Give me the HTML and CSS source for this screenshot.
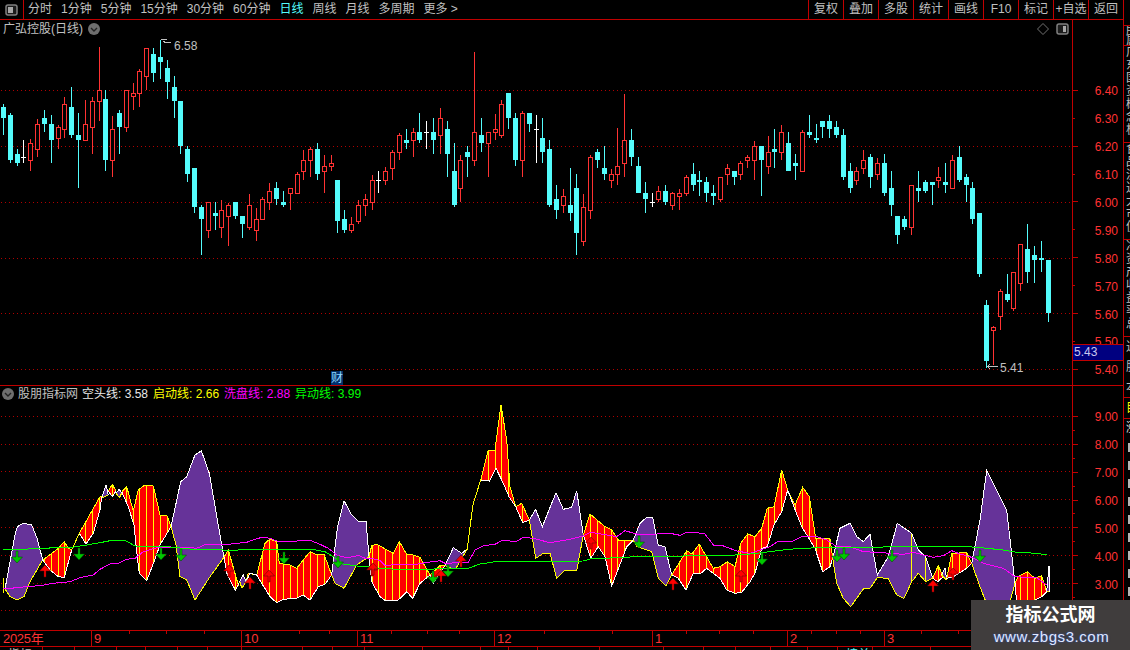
FILE: index.html
```html
<!DOCTYPE html>
<html lang="zh">
<head>
<meta charset="utf-8">
<title>广弘控股(日线)</title>
<link rel="stylesheet" href="styles.css">
</head>
<body>
<div class="app">
  <div class="left">
    <header class="toolbar">
      <div class="box-btn">
        <svg width="13" height="12" viewBox="0 0 13 12"><rect x="1" y="1" width="11" height="10" rx="2" class="ico-frame"/><rect x="3" y="3" width="5" height="6" class="ico-fill"/></svg>
      </div>
      <nav class="periods">
        <span>分时</span><span>1分钟</span><span>5分钟</span><span>15分钟</span><span>30分钟</span><span>60分钟</span><span class="active">日线</span><span>周线</span><span>月线</span><span>多周期</span><span>更多 &gt;</span>
      </nav>
      <nav class="actions">
        <span>复权</span><span>叠加</span><span>多股</span><span>统计</span><span>画线</span><span>F10</span><span>标记</span><span>+自选</span><span>返回</span>
      </nav>
    </header>

    <section class="pane pane-main">
      <div class="plot">
        <svg id="mainChart" class="canvas" viewBox="0 20 1072 365" width="1072" height="365"></svg>
        <div class="pane-head">
          <span class="name">广弘控股(日线)</span>
          <svg class="chev" width="12" height="12" viewBox="0 0 12 12"><circle cx="6" cy="6" r="6" class="chev-bg"/><path d="M3 5l3 3 3-3" class="chev-mark"/></svg>
          <span class="head-tools">
            <svg width="12" height="12" viewBox="0 0 12 12"><path d="M6 .5L11.5 6 6 11.5.5 6z" class="ico-diamond"/></svg>
            <svg width="13" height="12" viewBox="0 0 13 12"><rect x="1" y="1" width="11" height="10" rx="2" class="ico-frame"/><rect x="7" y="3" width="3" height="6" class="ico-fill"/></svg>
          </span>
        </div>
        <span class="cai">财</span>
      </div>
      <div class="axis">
        <svg id="mainAxis" viewBox="1073 20 50 365" width="50" height="365"></svg>
        <div class="price-tag">5.43</div>
      </div>
    </section>

    <section class="pane pane-sub">
      <div class="plot">
        <svg id="subChart" class="canvas" viewBox="0 386 1072 244" width="1072" height="244"></svg>
        <div class="pane-head sub-head">
          <svg class="chev" width="12" height="12" viewBox="0 0 12 12"><circle cx="6" cy="6" r="6" class="chev-bg"/><path d="M3 5l3 3 3-3" class="chev-mark"/></svg>
          <span class="name">股朋指标网</span>
          <span class="lg lg-white">空头线: 3.58</span>
          <span class="lg lg-yellow">启动线: 2.66</span>
          <span class="lg lg-magenta">洗盘线: 2.88</span>
          <span class="lg lg-green">异动线: 3.99</span>
        </div>
      </div>
      <div class="axis">
        <svg id="subAxis" viewBox="1073 386 50 244" width="50" height="244"></svg>
      </div>
    </section>

    <div class="datebar">
      <svg id="dateTicks" class="date-ticks" viewBox="0 0 1123 4" width="1123" height="4"></svg>
      <span class="m m-year">2025年</span><span class="m m-9">9</span><span class="m m-10">10</span><span class="m m-11">11</span><span class="m m-12">12</span><span class="m m-1">1</span><span class="m m-2">2</span><span class="m m-3">3</span>
    </div>

    <div class="tabs" id="tabs"></div>
  </div>

  <aside class="strip">
    <div class="st st-a"></div>
    <div class="st st-b">所属</div>
    <div class="st st-c">广东国资概念板</div>
    <div class="st st-d">食品流通大市值</div>
    <div class="st st-e">净资产收益率总</div>
    <div class="st st-f">通股本</div>
    <div class="st st-y">目</div>
    <div class="st st-g">
      <div class="st-word">涨</div>
      <i></i><i></i><i></i><i></i><i></i><i></i><i></i><i></i><i></i>
    </div>
  </aside>

  <div class="watermark">
    <div class="wm-title">指标公式网</div>
    <div class="wm-url">www.zbgs3.com</div>
  </div>
</div>
<script src="script.js"></script>
</body>
</html>
```
FILE: styles.css
```css
* { box-sizing: border-box; }
html, body { margin: 0; padding: 0; background: #000; }
body {
  font-family: "Liberation Sans", "Noto Sans CJK SC", sans-serif;
  font-size: 12px;
  color: #c0c0c0;
}
.app {
  position: relative;
  display: flex;
  width: 1130px;
  height: 650px;
  overflow: hidden;
  background: #000;
}
.left {
  display: flex;
  flex-direction: column;
  width: 1124px;
  height: 650px;
  border-right: 1px solid #c00000;
}
.toolbar {
  display: flex;
  align-items: stretch;
  height: 20px;
  border-bottom: 1px solid #c00000;
  line-height: 19px;
  white-space: nowrap;
}
.box-btn {
  display: flex;
  align-items: center;
  justify-content: center;
  width: 24px;
  border-right: 1px solid #c00000;
}
.periods {
  display: flex;
  gap: 9px;
  padding-left: 4px;
}
.periods .active { color: #54fcfc; }
.actions {
  display: flex;
  margin-left: auto;
}
.actions span {
  width: 35px;
  border-left: 1px solid #c00000;
  text-align: center;
}
.ico-frame { fill: #1c1c1c; stroke: #808080; stroke-width: 1.5; }
.ico-fill { fill: #a8a8a8; }
.ico-diamond { fill: none; stroke: #707070; stroke-width: 1; }
.chev-bg { fill: #6e6e6e; }
.chev-mark { fill: none; stroke: #222; stroke-width: 1.4; }

.pane { display: flex; }
.pane-main { height: 366px; border-bottom: 1px solid #c00000; }
.pane-sub { height: 244px; }
.plot { position: relative; width: 1072px; }
.canvas { position: absolute; left: 0; top: 0; display: block; }
.axis {
  position: relative;
  width: 51px;
  border-left: 1px solid #c00000;
}
.axis svg { display: block; }
.pane-sub .axis { border-top: 1px solid #c00000; margin-top: -1px; }

.pane-head {
  position: relative;
  display: flex;
  align-items: center;
  height: 18px;
  padding-left: 3px;
  line-height: 18px;
  white-space: nowrap;
}
.pane-head .chev { margin-left: 5px; }
.head-tools {
  display: flex;
  align-items: center;
  gap: 7px;
  margin-left: auto;
  padding-right: 2px;
  margin-right: 1px;
}
.sub-head { height: 16px; padding-left: 2px; line-height: 16px; }
.sub-head .chev { margin-left: 0; }
.sub-head .name { margin-left: 4px; margin-right: -1px; }
.lg { margin-left: 5px; }
.lg-white { color: #e8e8e8; }
.lg-yellow { color: #ffff00; }
.lg-magenta { color: #ff00ff; }
.lg-green { color: #00ff00; }

.cai {
  position: absolute;
  left: 331px;
  top: 351px;
  width: 12px;
  height: 14px;
  line-height: 14px;
  text-align: center;
  color: #8fd8ff;
  background: #00306a;
}
.price-tag {
  position: absolute;
  left: 0;
  top: 324px;
  width: 50px;
  height: 17px;
  padding-left: 1px;
  line-height: 15px;
  font-size: 12px;
  color: #c8c8f0;
  background: #000080;
  border-top: 1px solid #c00000;
  border-bottom: 1px solid #c00000;
}

.datebar {
  position: relative;
  display: flex;
  height: 17px;
  border-top: 1px solid #c00000;
  border-bottom: 1px solid #c00000;
  font-size: 13px;
  line-height: 15px;
  color: #ff3232;
}
.date-ticks { position: absolute; left: 0; top: 0; }
.m { padding-left: 2px; border-left: 1px solid #c00000; }
.m-year { width: 91px; border-left: 0; padding-left: 3px; letter-spacing: -.3px; }
.m-9 { width: 150px; }
.m-10 { width: 116px; }
.m-11 { width: 137px; }
.m-12 { width: 158px; }
.m-1 { width: 135px; }
.m-2 { width: 97px; }
.m-3 { flex: 1; }

.tabs {
  display: flex;
  height: 3px;
  overflow: hidden;
  line-height: 16px;
  font-size: 12px;
  white-space: nowrap;
}
.tabs span {
  flex: none;
  padding-left: 8px;
  border-right: 1px solid #c00000;
}
.tabs .tab-on { color: #54fcfc; }

.strip {
  display: flex;
  flex-direction: column;
  width: 6px;
  height: 650px;
  overflow: hidden;
}
.st {
  flex: none;
  width: 12px;
  padding-left: 2px;
  line-height: 13px;
  border-bottom: 1px solid #c00000;
  color: #c0c0c0;
  overflow: hidden;
  word-break: break-all;
}
.st-a { height: 26px; }
.st-b { height: 20px; line-height: 10px; }
.st-c { height: 97px; }
.st-d { height: 97px; }
.st-e { height: 97px; }
.st-f { height: 61px; line-height: 20px; }
.st-y { height: 21px; color: #ffff00; line-height: 20px; }
.st-g { flex: 1; border-bottom: 0; padding-left: 0; }
.st-word { padding-left: 2px; height: 24px; line-height: 18px; color: #e0e0e0; }
.st-g i {
  display: block;
  width: 3px;
  height: 9px;
  margin: 0 0 9px 4px;
  background: #b4b4b4;
}

.watermark {
  position: absolute;
  left: 971px;
  top: 600px;
  width: 159px;
  height: 50px;
  background: #403d3d;
  text-align: center;
}
.wm-title {
  margin-top: 4px;
  margin-left: 0;
  height: 22px;
  font-size: 18px;
  line-height: 22px;
  font-weight: 700;
  color: #ffffff;
}
.wm-url {
  margin-top: 2px;
  margin-left: 2px;
  font-size: 15px;
  line-height: 18px;
  letter-spacing: .55px;
  color: #dfe8ff;
  text-shadow: 0 0 2px #3050c0;
}

.grid { stroke: #b00000; stroke-width: 1; stroke-dasharray: 1 3; }
.axis-line { stroke: #c00000; stroke-width: 1; }
.axis-text { fill: #ff3232; font-size: 12px; font-family: "Liberation Sans", sans-serif; text-anchor: end; dominant-baseline: central; }
.note { fill: #c0c0c0; font-size: 12px; font-family: "Liberation Sans", sans-serif; dominant-baseline: central; }
.note-line { fill: none; stroke: #c0c0c0; stroke-width: 1; }
.crisp { shape-rendering: crispEdges; }
```
FILE: script.js
```js
var CYAN = '#54fcfc', RED = '#ff3232', WHITE = '#ffffff';

/* candles as read from the chart: [column, colour, high, bodyTop, bodyBottom, low], 3 units per pixel */
var candleGroups = [
  [0, 40, [[10,'c',192,201,234,285],[31,'c',219,225,360,369],[52,'c',327,342,369,378],[70,'w',300,352,352,369],[91,'r',297,309,363,393],[112,'r',237,252,330,351],[133,'c',210,234,252,276],[154,'c',225,252,300,369],[175,'r',255,261,297,327],[193,'r',171,192,270,294],[214,'c',141,201,285,294],[235,'c',219,285,300,444],[256,'r',180,252,303,303],[277,'r',171,183,264,342],[298,'r',21,150,186,243],[316,'c',150,177,360,393],[337,'r',228,267,363,411],[358,'c',210,219,261,342],[379,'r',150,150,264,276],[400,'r',129,159,171,210],[418,'r',87,93,162,201],[439,'r',24,24,111,150],[460,'c',24,42,99,126],[481,'c',0,51,66,117],[502,'c',60,84,126,177],[523,'c',108,141,183,234],[541,'c',183,183,318,342],[562,'c',318,327,402,426],[583,'c',384,384,501,519],[604,'c',495,501,537,645],[625,'r',486,486,573,594],[646,'c',486,519,528,570],[664,'r',480,510,564,594],[685,'r',489,495,531,618],[706,'c',486,486,528,537],[727,'c',528,528,552,594],[748,'r',462,495,564,570],[769,'r',504,537,573,603],[787,'r',471,477,540,540],[808,'r',429,453,489,510],[829,'c',426,444,477,495]]],
  [280, 80, [[10,'c',333,366,375,381],[31,'r',324,324,342,390],[52,'r',276,282,342,342],[70,'r',210,240,276,300],[91,'r',201,207,243,291],[112,'c',189,207,282,300],[133,'r',225,258,276,339],[154,'r',225,249,261,273],[172,'c',300,300,423,459],[193,'c',390,417,450,459],[214,'r',411,432,453,459],[235,'r',360,375,426,432],[256,'r',342,357,378,408],[277,'r',285,300,369,390],[295,'w',273,300,300,339],[316,'r',261,273,303,315],[337,'r',210,216,267,300],[358,'r',159,165,219,240],[379,'c',147,180,189,207],[400,'r',144,156,183,231],[418,'c',99,156,180,189],[439,'w',123,157,157,207],[460,'c',114,156,180,222],[481,'r',84,114,168,222],[502,'c',123,147,222,291],[523,'c',189,273,375,381],[541,'r',225,240,327,366],[562,'c',198,216,231,291],[583,'r',-84,156,243,258],[604,'c',114,165,189,216],[625,'r',156,156,192,291],[646,'r',102,147,159,180],[664,'r',60,72,168,174],[685,'c',39,39,114,147],[706,'c',99,114,240,258],[727,'r',93,99,243,291],[748,'c',99,99,132,156],[769,'w',105,148,148,249],[787,'c',114,174,216,249],[808,'c',180,207,375,381],[829,'c',315,357,390,417]]],
  [560, 90, [[10,'r',297,318,348,369],[31,'c',234,345,369,393],[49,'c',252,294,429,495],[70,'r',312,351,456,468],[91,'r',195,201,363,387],[112,'c',177,186,210,234],[133,'c',168,234,252,270],[154,'r',237,252,273,294],[172,'r',114,228,255,285],[193,'r',12,150,222,261],[214,'c',117,150,201,228],[235,'c',201,228,309,309],[256,'c',276,309,327,369],[277,'w',309,337,337,351],[295,'r',288,303,330,336],[316,'c',285,303,336,345],[337,'r',306,309,348,360],[358,'r',297,309,321,360],[379,'r',255,261,312,318],[400,'c',219,252,285,303],[418,'c',243,270,276,318],[439,'c',261,276,309,336],[460,'c',285,309,318,345],[481,'r',261,261,330,336],[502,'r',222,234,255,285],[523,'c',243,243,261,285],[541,'r',213,219,255,270],[562,'r',195,201,213,234],[583,'r',153,168,213,270],[604,'c',168,168,210,318],[625,'r',138,186,231,252],[643,'c',117,177,186,234],[664,'r',105,126,189,210],[685,'c',126,159,243,243],[706,'c',192,219,228,270],[727,'r',120,126,246,246],[748,'c',75,126,135,144],[769,'c',102,144,150,159],[787,'c',93,93,111,144],[808,'c',75,93,117,144],[829,'c',93,111,135,144]]],
  [840, 100, [[9,'c',87,105,231,240],[30,'c',189,213,264,279],[49,'r',201,213,243,255],[70,'r',150,180,207,222],[91,'c',162,171,231,264],[112,'r',174,189,225,240],[133,'c',162,189,279,288],[154,'c',213,264,315,348],[172,'c',348,348,405,432],[193,'c',348,357,381,390],[214,'r',255,255,384,405],[235,'c',213,264,273,306],[256,'c',240,246,273,279],[277,'c',246,246,255,315],[295,'r',201,231,243,264],[316,'c',189,246,255,279],[337,'r',165,180,267,267],[358,'c',138,171,240,246],[379,'c',222,231,255,306],[397,'c',246,264,357,372],[418,'c',339,339,522,531],[439,'c',600,615,783,804],[460,'r',678,681,693,795],[481,'r',567,573,651,690],[502,'c',522,582,600,606],[520,'r',516,516,627,633],[541,'r',432,432,552,573],[562,'c',372,447,516,549],[583,'c',438,465,480,549],[604,'c',423,474,480,516],[625,'c',480,480,639,666]]]
];

function line(x1, y1, x2, y2, cls, color) {
  return '<line x1="' + x1 + '" y1="' + y1 + '" x2="' + x2 + '" y2="' + y2 + '"' +
    (cls ? ' class="' + cls + '"' : '') + (color ? ' stroke="' + color + '"' : '') + ' shape-rendering="crispEdges"/>';
}

function drawMain() {
  var out = '';
  [90.5, 146.5, 202.5, 258.5, 313.5, 369.5].forEach(function (y) {
    out += line(1, y, 1072, y, 'grid');
  });
  candleGroups.forEach(function (g) {
    var ox = g[0], oy = g[1];
    g[2].forEach(function (k) {
      var x = ox + Math.floor(k[0] / 3), c = k[1];
      var hi = oy + k[2] / 3, top = oy + Math.round(k[3] / 3), bot = oy + Math.round(k[4] / 3), lo = oy + k[5] / 3;
      var color = c === 'c' ? CYAN : c === 'r' ? RED : WHITE, mid = x + 0.5;
      if (c === 'w') {
        out += line(mid, hi, mid, lo, '', color);
        out += line(x - 2, top + 0.5, x + 3, top + 0.5, '', color);
      } else if (c === 'c') {
        out += line(mid, hi, mid, lo, '', color);
        out += '<rect x="' + (x - 2) + '" y="' + top + '" width="5" height="' + Math.max(2, bot - top) + '" fill="' + color + '" shape-rendering="crispEdges"/>';
      } else {
        if (hi < top) out += line(mid, hi, mid, top, '', color);
        if (lo > bot) out += line(mid, bot, mid, lo, '', color);
        out += '<rect x="' + (x - 1.5) + '" y="' + (top + 0.5) + '" width="4" height="' + Math.max(1, bot - top - 1) + '" fill="#000" stroke="' + color + '" shape-rendering="crispEdges"/>';
      }
    });
  });
  out += '<path class="note-line crisp" d="M160.5 39.5h6M163 41.5l3 1 5 0"/>';
  out += '<text class="note" x="174" y="46">6.58</text>';
  out += '<path class="note-line crisp" d="M987 366.5h11M987 366.5l3-2M987 366.5l3 2"/>';
  out += '<text class="note" x="1000" y="368">5.41</text>';
  document.getElementById('mainChart').innerHTML = out;
}

/* indicator ribbons, read from three crops of the pane */
var Z7 = [0, 385], Z8 = [370, 400], Z9 = [750, 400];
function scr(o, p) { return [o[0] + p[0] / 3, o[1] + p[1] / 3]; }
var ribbons = [
  ['p', Z7, [[15,612],[45,450],[52,425],[70,415],[95,420],[112,462],[128,525]], [[15,612],[30,635],[52,645],[72,635],[90,590],[128,525]]],
  ['r', Z7, [[128,525],[175,490],[193,470],[205,490],[215,495]], [[128,525],[150,555],[175,575],[193,577],[215,495]]],
  ['r', Z7, [[238,445],[300,335],[305,335]], [[238,445],[258,477],[280,445],[300,375],[305,335]]],
  ['p', Z7, [[305,340],[318,300],[325,330]], [[305,340],[325,330]]],
  ['r', Z7, [[325,318],[337,298],[348,318]], [[325,318],[337,335],[348,318]]],
  ['p', Z7, [[348,325],[358,313],[365,325]], [[348,325],[358,338],[365,325]]],
  ['r', Z7, [[365,320],[380,305],[400,378],[415,315],[435,300],[460,303],[480,390],[500,390],[513,425]], [[365,320],[385,365],[402,420],[410,500],[418,565],[440,587],[462,530],[480,480],[513,425]]],
  ['p', Z7, [[513,425],[542,290],[560,275],[585,210],[604,197],[628,265],[660,450],[672,517]], [[513,425],[528,480],[540,575],[560,585],[585,645],[630,575],[672,517]]],
  ['r', Z7, [[672,517],[685,495],[715,600],[719,590]], [[672,517],[682,570],[706,615],[719,590]]],
  ['p', Z7, [[719,590],[730,570],[738,590]], [[719,590],[726,610],[738,590]]],
  ['r', Z7, [[738,590],[745,565],[770,570],[795,475],[810,462],[830,470],[838,535],[870,540],[890,550],[930,500],[950,510],[972,508],[995,570]], [[738,590],[750,565],[770,570],[785,595],[810,635],[830,653],[850,643],[890,640],[910,630],[930,645],[955,605],[975,598],[995,570]]],
  ['p', Z7, [[995,570],[1012,430],[1032,347],[1055,390],[1075,408],[1098,408],[1107,515]], [[995,570],[1005,595],[1032,610],[1070,540],[1107,515]]],
  ['r', Z8, [[-3,470],[5,437],[20,433],[70,460],[88,425],[110,463],[130,465],[150,472],[180,525]], [[-3,470],[5,545],[30,590],[48,603],[85,600],[110,575],[128,595],[150,550],[180,525]]],
  ['r', Z8, [[180,525],[210,497],[225,497]], [[180,525],[190,550],[210,520],[225,497]]],
  ['p', Z8, [[225,497],[250,443],[275,460],[292,447]], [[225,497],[245,505],[258,505],[275,475],[292,447]]],
  ['r', Z8, [[332,240],[355,150],[375,150],[393,15],[410,120],[420,260],[437,320]], [[332,240],[358,243],[378,205],[400,250],[418,292],[437,320]]],
  ['r', Z8, [[437,320],[455,310],[478,360]], [[437,320],[458,368],[478,360]]],
  ['p', Z8, [[478,360],[497,328],[517,380],[558,278],[580,328],[605,322],[620,272],[640,405]], [[478,360],[497,475],[520,460],[540,460],[560,535],[585,510],[620,513],[640,405]]],
  ['r', Z8, [[640,405],[660,342],[705,380],[725,390],[745,420],[790,420]], [[640,405],[662,475],[685,440],[705,470],[725,558],[755,480],[770,440],[790,420]]],
  ['p', Z8, [[790,420],[810,370],[830,352],[848,352],[865,435],[885,440],[905,525]], [[790,420],[800,440],[845,455],[865,535],[888,558],[905,525]]],
  ['r', Z8, [[905,525],[950,452],[965,462],[988,433],[1030,505],[1050,500],[1072,485],[1095,500],[1112,430],[1133,402],[1155,410],[1175,385],[1192,325],[1212,320],[1235,210],[1253,270]], [[905,525],[925,535],[948,570],[970,520],[990,522],[1010,505],[1050,535],[1070,570],[1095,580],[1115,577],[1140,545],[1155,520],[1175,445],[1192,440],[1212,375],[1235,335],[1253,270]]],
  ['r', Z9, [[113,270],[135,315],[158,262],[178,290],[197,415],[240,417],[248,475]], [[113,270],[130,315],[155,380],[195,445],[218,515],[240,500],[248,475]]],
  ['p', Z9, [[248,475],[270,385],[300,370],[320,410],[340,425],[360,403],[382,525],[415,470],[442,370],[485,400],[505,450],[527,470],[548,535]], [[248,475],[260,550],[280,595],[302,620],[340,567],[360,565],[382,533],[415,535],[440,585],[462,595],[485,545],[505,520],[527,545],[548,535]]],
  ['r', Z9, [[548,535],[565,497],[580,530]], [[548,535],[563,545],[580,530]]],
  ['p', Z9, [[575,525],[585,505],[590,540]], [[575,525],[580,530],[590,540]]],
  ['r', Z9, [[590,535],[605,460],[650,458],[665,490]], [[590,535],[610,530],[650,505],[665,490]]],
  ['p', Z9, [[665,490],[690,360],[710,212],[770,330],[795,550]], [[665,490],[690,560],[725,650],[750,650],[780,605],[795,550]]],
  ['r', Z9, [[795,550],[805,530],[832,515],[855,535],[875,527],[890,575]], [[795,550],[800,610],[855,600],[875,590],[890,575]]],
  ['p', Z9, [[890,575],[897,497],[897,575]], [[890,575],[897,575]]]
];
var magenta = [[Z7,[[10,612],[50,608],[90,604],[120,602],[160,595],[210,590],[240,578],[280,570],[300,553],[330,537],[355,535],[380,523],[405,520],[430,500],[470,488],[510,486],[560,487],[590,490],[620,477],[670,480],[700,476],[740,472],[760,465],[785,457],[810,460],[830,468],[890,468],[930,466],[960,478],[985,490],[1010,510],[1040,518],[1060,515],[1075,511],[1100,522]]],
  [Z8,[[5,475],[30,482],[45,497],[80,493],[130,495],[165,488],[210,482],[225,490],[295,487],[315,450],[340,437],[375,433],[395,422],[440,424],[460,412],[490,415],[540,428],[600,418],[640,408],[660,397],[700,403],[740,410],[765,392],[810,405],[860,402],[900,400],[930,406],[950,397],[980,398],[1005,402],[1030,435],[1055,436],[1100,453]]],
  [Z9,[[0,460],[30,450],[60,440],[85,423],[130,423],[160,408],[195,408],[230,420],[260,440],[300,440],[340,455],[380,457],[420,460],[460,463],[490,457],[520,465],[550,472],[580,467],[605,452],[630,462],[660,470],[700,490],[760,505],[795,530],[830,532],[860,533],[890,555]]]];
var green = [[Z7,[[10,493],[80,493],[90,490],[210,488],[260,480],[300,473],[330,467],[375,466],[400,480],[415,485],[510,486],[570,492],[700,496],[760,492],[930,492],[975,500],[1000,515],[1030,537],[1070,543],[1110,546]]],
  [Z8,[[30,505],[80,508],[150,508],[295,505],[330,492],[390,483],[410,486],[640,483],[660,477],[800,470],[1080,466]]],
  [Z9,[[0,462],[35,458],[100,450],[150,445],[260,442],[400,441],[600,440],[620,438],[680,442],[760,450],[800,457],[860,460],[890,465]]]];
var arrows = [
  ['g',Z7,52,533],['g',Z7,237,525],['g',Z7,482,525],['g',Z7,543,528],['g',Z7,851,537],['g',Z7,1014,548],
  ['r',Z7,134,540],['r',Z7,686,540],['r',Z7,749,577],['r',Z7,808,555],['r',Z7,1117,537],
  ['g',Z8,190,550],['g',Z8,233,530],['g',Z8,807,445],
  ['r',Z8,8,490],['r',Z8,212,510],['r',Z8,272,465],['r',Z8,662,410],['r',Z8,908,533],['r',Z8,1112,510],
  ['g',Z9,35,495],['g',Z9,260,487],['g',Z9,283,480],['g',Z9,427,485],['g',Z9,690,487],
  ['r',Z9,548,540],['r',Z9,610,505]
];

function pts(list) { return list.map(function (p) { return p[0].toFixed(1) + ',' + p[1].toFixed(1); }).join(' '); }
function poly(list, stroke) {
  return '<polyline points="' + pts(list) + '" fill="none" stroke="' + stroke + '" stroke-width="1" shape-rendering="crispEdges"/>';
}
function yAt(list, x) {
  for (var i = 1; i < list.length; i++) {
    if (x <= list[i][0]) {
      var a = list[i - 1], b = list[i], t = (x - a[0]) / ((b[0] - a[0]) || 1);
      return a[1] + (b[1] - a[1]) * t;
    }
  }
  return list[list.length - 1][1];
}
function candleColumns() {
  var xs = [];
  candleGroups.forEach(function (g) { g[2].forEach(function (k) { xs.push(g[0] + Math.floor(k[0] / 3) + 0.5); }); });
  return xs;
}

function drawSub() {
  var out = '', xs = candleColumns(), fills = '', lines = '';
  [416.5, 444.5, 471.5, 499.5, 527.5, 555.5, 583.5, 610.5].forEach(function (y) {
    out += line(1, y, 1072, y, 'grid');
  });
  out += line(3.5, 578, 3.5, 593, '', '#ffff00');
  ribbons.forEach(function (r) {
    var top = r[2].map(function (p) { return scr(r[1], p); });
    var bot = r[3].map(function (p) { return scr(r[1], p); });
    var isRed = r[0] === 'r';
    fills += '<polygon points="' + pts(top.concat(bot.slice().reverse())) + '" fill="' + (isRed ? '#ff0000' : '#663399') + '" shape-rendering="crispEdges"/>';
    if (isRed) {
      xs.forEach(function (x) {
        if (x > top[0][0] && x < top[top.length - 1][0]) {
          fills += line(x, yAt(top, x), x, yAt(bot, x), '', '#ffff00');
        }
      });
    }
    lines += poly(top, isRed ? '#ffff00' : '#ffffff');
    lines += poly(bot, isRed ? '#ffffff' : '#ffff00');
  });
  out += fills;
  out += line(911, 533, 911, 582, '', '#ffff00') + line(925.5, 557, 925.5, 582, '', '#ffff00');
  out += lines;
  var join1 = [[215,495],[238,445]].map(function (p) { return scr(Z7, p); });
  out += poly(join1, '#ffff00');
  var join2 = [[292,447],[300,380],[310,310],[332,240]].map(function (p) { return scr(Z8, p); });
  out += poly(join2, '#ffff00');
  [[magenta, '#ff00ff'], [green, '#00ff00']].forEach(function (def) {
    var all = [];
    def[0].forEach(function (s) { s[1].forEach(function (p) { all.push(scr(s[0], p)); }); });
    out += poly(all, def[1]);
  });
  arrows.forEach(function (a) {
    var t = scr(a[1], [a[2], a[3]]), x = Math.round(t[0]), y = Math.round(t[1]);
    var s = a[0] === 'g' ? -1 : 1;
    var d = [[x-1,y+s*12],[x+1,y+s*12],[x+1,y+s*6],[x+5.5,y+s*6],[x,y],[x-5.5,y+s*6],[x-1,y+s*6]];
    out += '<polygon points="' + pts(d) + '" fill="' + (a[0] === 'g' ? '#00c800' : '#ff0000') + '" stroke="' + (a[0] === 'g' ? '#004000' : '#500000') + '" stroke-width=".5"/>';
  });
  document.getElementById('subChart').innerHTML = out;
}

function drawAxis(id, y0, step, labels, majorEvery, extra) {
  var out = '', x = 1073;
  labels.forEach(function (txt, i) {
    var y = y0 + i * step, major = i % majorEvery === 0;
    out += line(x, Math.floor(y) + 0.5, x + (major ? 5 : 2), Math.floor(y) + 0.5, 'axis-line');
    out += '<text class="axis-text" x="1118" y="' + (y + 1) + '">' + txt + '</text>';
  });
  (extra || []).forEach(function (e) {
    out += line(x, e[0] + 0.5, x + e[1], e[0] + 0.5, 'axis-line');
  });
  document.getElementById(id).innerHTML = out;
}

function drawDateTicks() {
  var out = '';
  [129,166,204,299,329,391,427,459,544,612,686,719,753,811,836,860,921,958].forEach(function (x) {
    out += line(x + 0.5, 0, x + 0.5, 3, 'axis-line');
  });
  document.getElementById('dateTicks').innerHTML = out;
}

function drawTabs() {
  var edges = [42,74,116,145,177,207,241,302,332,364,422,480,508,537,599,663,703,735,770,807,837,872,930];
  var prev = 0, box = document.getElementById('tabs');
  edges.forEach(function (e, i) {
    var s = document.createElement('span');
    s.style.width = (e - prev + 1) + 'px';
    if (i === 0) s.textContent = '指标';
    if (i === 21) { s.textContent = '榜单'; s.className = 'tab-on'; }
    box.appendChild(s);
    prev = e + 1;
  });
}

drawMain();
drawSub();
var mainLabels = ['6.40','6.30','6.20','6.10','6.00','5.90','5.80','5.70','5.60','5.50','5.40'];
drawAxis('mainAxis', 90.3, 27.9, mainLabels, 2);
var subLabels = ['9.00','8.00','7.00','6.00','5.00','4.00','3.00'];
drawAxis('subAxis', 416.3, 27.9, subLabels, 1, [[430,2],[458,2],[486,2],[513,2],[541,2],[569,2],[597,2]]);
drawDateTicks();
drawTabs();
```
